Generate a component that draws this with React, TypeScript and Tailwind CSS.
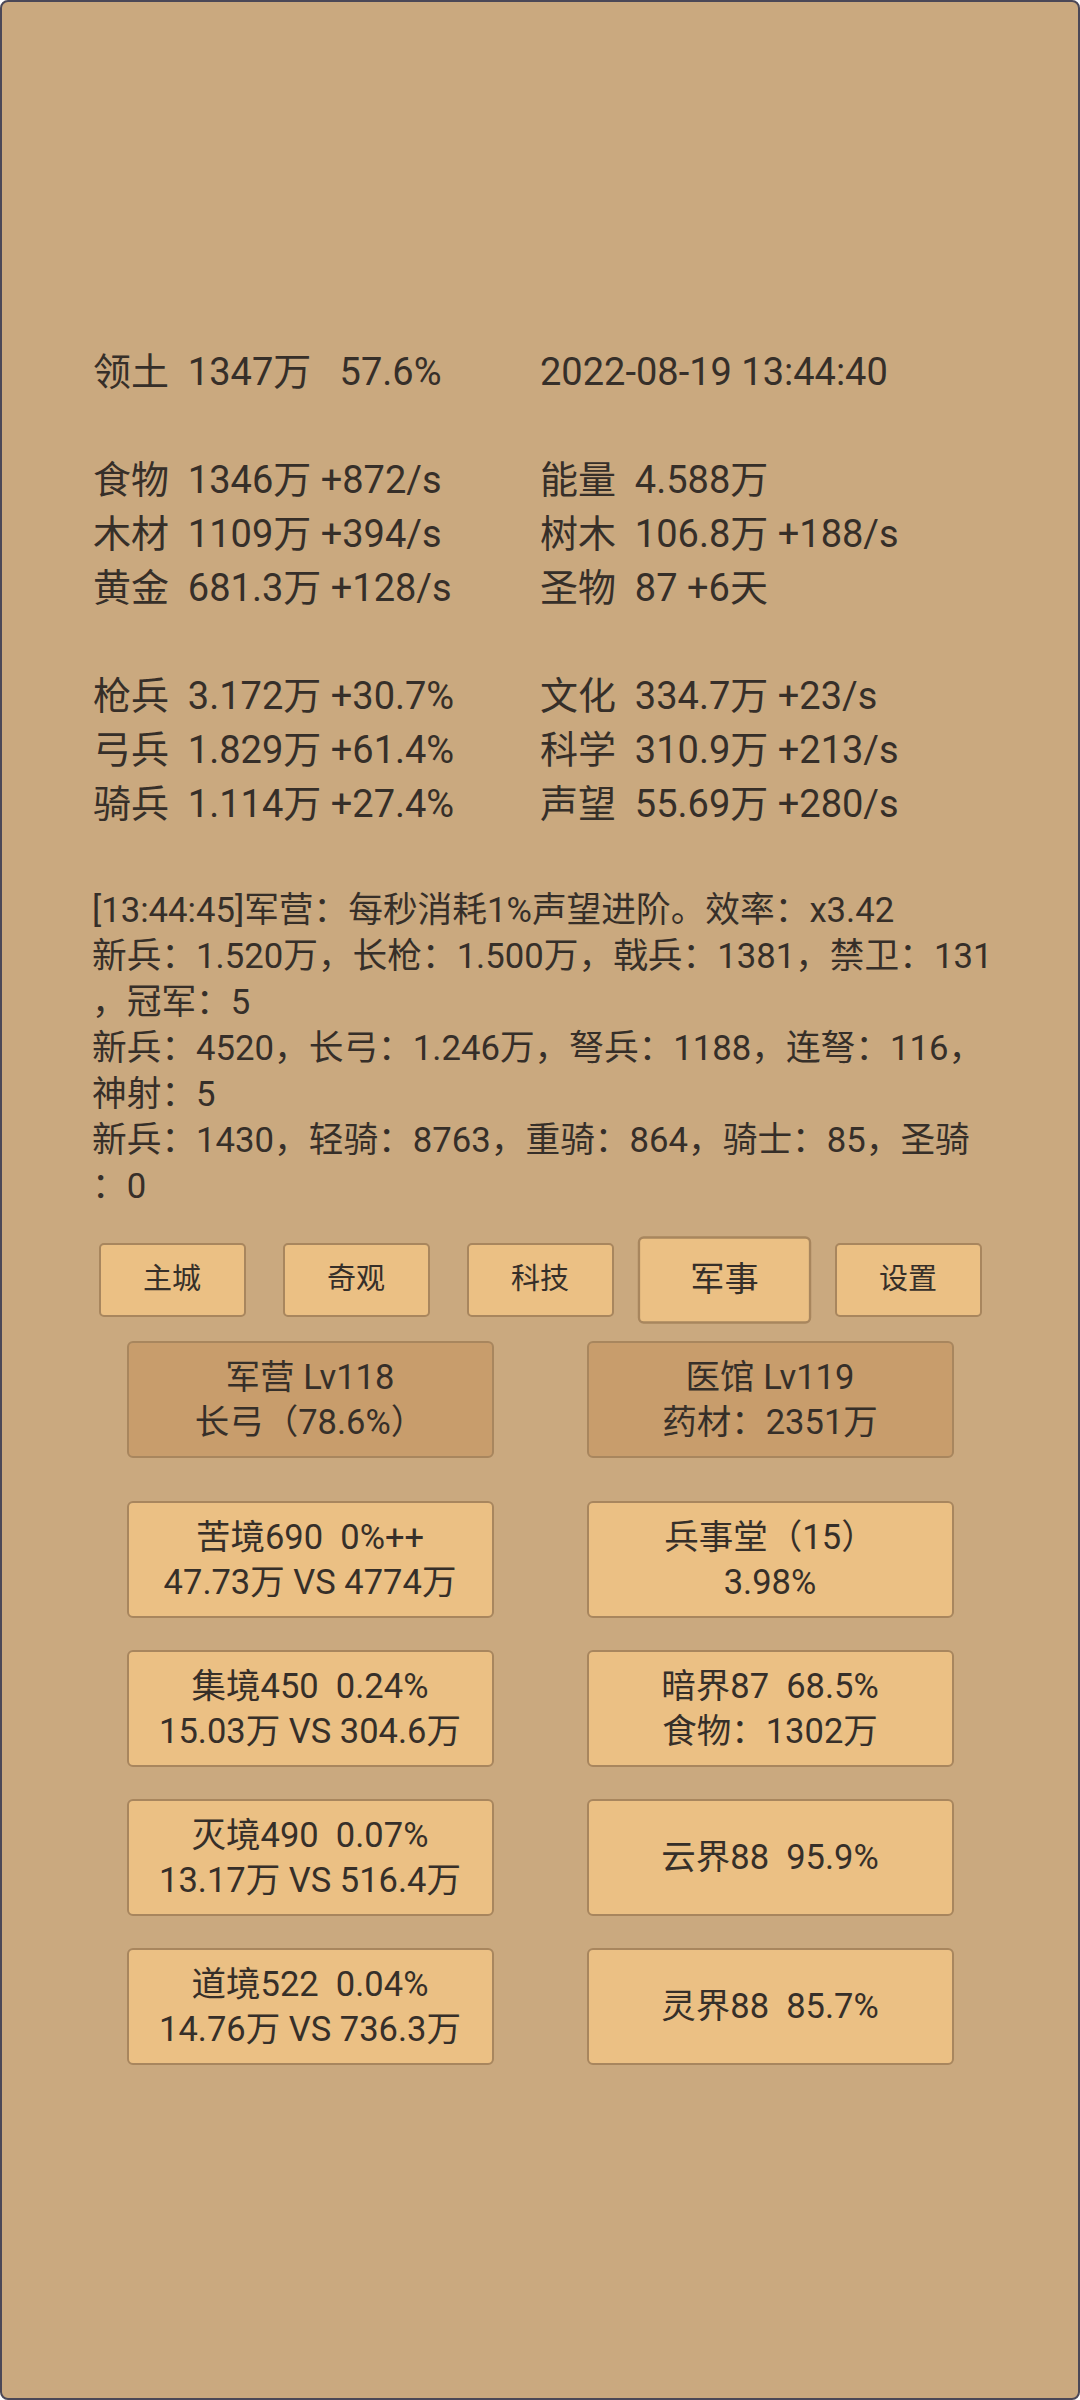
const stats: ([string, string] | null)[] = [
  ["领土  1347万   57.6%", "2022-08-19 13:44:40"],
  null,
  ["食物  1346万 +872/s", "能量  4.588万"],
  ["木材  1109万 +394/s", "树木  106.8万 +188/s"],
  ["黄金  681.3万 +128/s", "圣物  87 +6天"],
  null,
  ["枪兵  3.172万 +30.7%", "文化  334.7万 +23/s"],
  ["弓兵  1.829万 +61.4%", "科学  310.9万 +213/s"],
  ["骑兵  1.114万 +27.4%", "声望  55.69万 +280/s"],
];

const logLines = [
  "[13:44:45]军营：每秒消耗1%声望进阶。效率：x3.42",
  "新兵：1.520万，长枪：1.500万，戟兵：1381，禁卫：131",
  "，冠军：5",
  "新兵：4520，长弓：1.246万，弩兵：1188，连弩：116，",
  "神射：5",
  "新兵：1430，轻骑：8763，重骑：864，骑士：85，圣骑",
  "：0",
];

const tabs = ["主城", "奇观", "科技", "军事", "设置"];

const cards: { lines: string[]; dark?: boolean }[][] = [
  [
    { lines: ["军营 Lv118", "长弓（78.6%）"], dark: true },
    { lines: ["医馆 Lv119", "药材：2351万"], dark: true },
  ],
  [
    { lines: ["苦境690  0%++", "47.73万 VS 4774万"] },
    { lines: ["兵事堂（15）", "3.98%"] },
  ],
  [
    { lines: ["集境450  0.24%", "15.03万 VS 304.6万"] },
    { lines: ["暗界87  68.5%", "食物：1302万"] },
  ],
  [
    { lines: ["灭境490  0.07%", "13.17万 VS 516.4万"] },
    { lines: ["云界88  95.9%"] },
  ],
  [
    { lines: ["道境522  0.04%", "14.76万 VS 736.3万"] },
    { lines: ["灵界88  85.7%"] },
  ],
];

function Card({ lines, dark }: { lines: string[]; dark?: boolean }) {
  return (
    <div
      className={
        "mx-auto flex h-[117px] w-[367px] flex-col items-center justify-center rounded-[6px] border-2 border-[#a8865e] text-[34.5px] leading-[45px] " +
        (dark ? "bg-[#c89d6c]" : "bg-[#ebc084]")
      }
    >
      {lines.map((l, i) => (
        <div key={i} className="whitespace-pre">
          {l}
        </div>
      ))}
    </div>
  );
}

export default function App() {
  return (
    <div
      className="h-[2400px] w-[1080px] overflow-hidden rounded-[8px] border-2 border-[#4b4857] bg-[#caa97f] text-[#362f29]"
      style={{ fontFamily: '"Roboto", "Noto Sans CJK SC", sans-serif' }}
    >
      {/* stats */}
      <div className="pl-[91px] pt-[343px] text-[38px] leading-[54px]">
        {stats.map((row, i) =>
          row ? (
            <div key={i} className="grid grid-cols-[447px_1fr] whitespace-pre">
              <span>{row[0]}</span>
              <span>{row[1]}</span>
            </div>
          ) : (
            <div key={i} className="h-[54px]" />
          )
        )}
      </div>

      {/* log */}
      <div className="mt-[56px] pl-[90px] text-[34.7px] leading-[46px]">
        {logLines.map((l, i) => (
          <div key={i} className="whitespace-nowrap">
            {l}
          </div>
        ))}
      </div>

      {/* tabs */}
      <div className="mx-[78px] mt-[34px] flex">
        {tabs.map((t) => (
          <div key={t} className="flex w-[184px] justify-center">
            <div
              className={
                "flex h-[74px] w-[147px] items-center justify-center rounded-[5px] border-2 border-[#a8865e] bg-[#ebc084] text-[29px] " +
                (t === "军事" ? "scale-[1.18]" : "")
              }
            >
              {t}
            </div>
          </div>
        ))}
      </div>

      {/* cards */}
      <div className="mx-[78px] mt-[24px] flex flex-col">
        {cards.map((row, i) => (
          <div key={i} className={"grid grid-cols-2 " + (i === 0 ? "" : i === 1 ? "mt-[43px]" : "mt-[32px]")}>
            {row.map((c, j) => (
              <Card key={j} lines={c.lines} dark={c.dark} />
            ))}
          </div>
        ))}
      </div>
    </div>
  );
}
